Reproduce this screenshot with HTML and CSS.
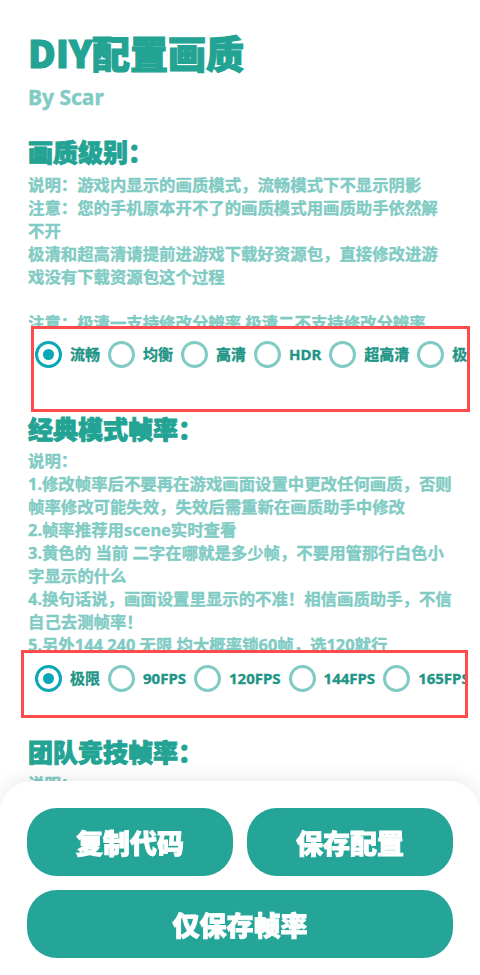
FILE: index.html
```html
<!DOCTYPE html>
<html lang="zh-CN">
<head>
<meta charset="utf-8">
<meta name="viewport" content="width=480">
<title>DIY配置画质</title>
<link rel="stylesheet" href="styles.css">
</head>
<body>
<main class="page">
  <h1 class="title">DIY配置画质</h1>
  <div class="author">By Scar</div>

  <section class="section">
    <h2 class="section-title">画质级别：</h2>
    <div class="desc desc-quality">
      说明：游戏内显示的画质模式，流畅模式下不显示阴影<br>
      注意：您的手机原本开不了的画质模式用画质助手依然解<br>
      不开<br>
      极清和超高清请提前进游戏下载好资源包，直接修改进游<br>
      戏没有下载资源包这个过程<br>
      <br>
      注意：极清一支持修改分辨率 极清二不支持修改分辨率
    </div>
    <div class="radio-group group-quality">
      <label class="option"><span class="radio checked"></span><span class="label">流畅</span></label>
      <label class="option"><span class="radio"></span><span class="label">均衡</span></label>
      <label class="option"><span class="radio"></span><span class="label">高清</span></label>
      <label class="option"><span class="radio"></span><span class="label">HDR</span></label>
      <label class="option"><span class="radio"></span><span class="label">超高清</span></label>
      <label class="option"><span class="radio"></span><span class="label">极清</span></label>
    </div>
  </section>

  <section class="section section-fps">
    <h2 class="section-title">经典模式帧率：</h2>
    <div class="desc desc-fps">
      说明：<br>
      1.修改帧率后不要再在游戏画面设置中更改任何画质，否则<br>
      帧率修改可能失效，失效后需重新在画质助手中修改<br>
      2.帧率推荐用scene实时查看<br>
      3.黄色的 当前 二字在哪就是多少帧，不要用管那行白色小<br>
      字显示的什么<br>
      4.换句话说，画面设置里显示的不准！相信画质助手，不信<br>
      自己去测帧率！<br>
      5.另外144 240 无限 均大概率锁60帧，选120就行
    </div>
    <div class="radio-group group-fps">
      <label class="option"><span class="radio checked"></span><span class="label">极限</span></label>
      <label class="option"><span class="radio"></span><span class="label">90FPS</span></label>
      <label class="option"><span class="radio"></span><span class="label">120FPS</span></label>
      <label class="option"><span class="radio"></span><span class="label">144FPS</span></label>
      <label class="option"><span class="radio"></span><span class="label">165FPS</span></label>
    </div>
  </section>

  <section class="section section-team">
    <h2 class="section-title">团队竞技帧率：</h2>
    <div class="desc desc-team">说明：</div>
  </section>
</main>

<footer class="sheet">
  <button class="btn">复制代码</button>
  <button class="btn">保存配置</button>
  <button class="btn btn-wide">仅保存帧率</button>
</footer>
</body>
</html>
```

FILE: styles.css
```css
html, body {
  margin: 0;
  padding: 0;
  background: #ffffff;
  overflow: hidden;
}

body {
  font-family: "Noto Sans", "Noto Sans CJK SC", sans-serif;
  font-weight: 700;
}

.page {
  padding: 28px 28px 0 28px;
  height: 947px;
  box-sizing: border-box;
}

.title {
  margin: 0;
  font-size: 38px;
  line-height: 48px;
  font-weight: 900;
  color: #22a393;
  -webkit-text-stroke: 1.2px #22a393;
  font-family: "Noto Sans CJK SC", "Noto Sans", sans-serif;
}

.author {
  margin-top: 6px;
  font-size: 21px;
  line-height: 30px;
  color: #80cbc4;
  -webkit-text-stroke: 0.4px #80cbc4;
}

.section-title {
  margin: 22px 0 0 0;
  font-size: 25px;
  line-height: 34px;
  font-weight: 900;
  color: #22a393;
  -webkit-text-stroke: 0.9px #22a393;
  font-family: "Noto Sans CJK SC", "Noto Sans", sans-serif;
}

.section-fps .section-title {
  margin-top: -1px;
}

.section-team .section-title {
  margin-top: 16px;
}

.desc {
  font-size: 16.4px;
  line-height: 23px;
  color: #80cbc4;
  -webkit-text-stroke: 0.35px #80cbc4;
  overflow: hidden;
  white-space: nowrap;
  margin-right: -20px;
}

.desc-quality {
  margin-top: 5px;
  height: 153px;
}

.desc-fps {
  margin-top: 4px;
  height: 201px;
}

.desc-team {
  margin-top: 4px;
}

.radio-group {
  display: flex;
  align-items: flex-start;
  flex-wrap: nowrap;
  overflow: hidden;
  box-sizing: border-box;
  border: 3px solid #ff4b4b;
  padding-top: 12px;
  white-space: nowrap;
}

.group-quality {
  margin-left: 3px;
  margin-right: -18px;
  height: 86px;
  padding-left: 1px;
}

.group-fps {
  margin-left: -7px;
  margin-right: -16px;
  height: 68px;
  padding-left: 11px;
}

.option {
  display: inline-flex;
  align-items: center;
  flex: none;
  gap: 8px;
  margin-right: 8px;
}

.radio {
  width: 27px;
  height: 27px;
  box-sizing: border-box;
  border: 3px solid #80cbc4;
  border-radius: 50%;
  display: flex;
  align-items: center;
  justify-content: center;
  flex: none;
}

.radio.checked {
  border-color: #0aa7b6;
}

.radio.checked::after {
  content: "";
  width: 11px;
  height: 11px;
  border-radius: 50%;
  background: #0aa7b6;
}

.label {
  font-size: 15px;
  line-height: 27px;
  color: #1f9587;
  -webkit-text-stroke: 0.35px #1f9587;
}

.sheet {
  position: fixed;
  left: 0;
  right: 0;
  bottom: 0;
  height: 194px;
  box-sizing: border-box;
  padding: 27px 27px 17px 27px;
  background: #ffffff;
  border-radius: 32px 32px 0 0;
  box-shadow: 0 -4px 18px rgba(0, 0, 0, 0.08);
  display: grid;
  grid-template-columns: 1fr 1fr;
  grid-auto-rows: 68px;
  gap: 14px;
}

.btn {
  border: none;
  border-radius: 30px;
  background: #25a598;
  color: #ffffff;
  font-family: "Noto Sans CJK SC", sans-serif;
  font-weight: 900;
  font-size: 27px;
  -webkit-text-stroke: 0.9px #ffffff;
  padding: 0;
}

.btn-wide {
  grid-column: 1 / span 2;
}
```
